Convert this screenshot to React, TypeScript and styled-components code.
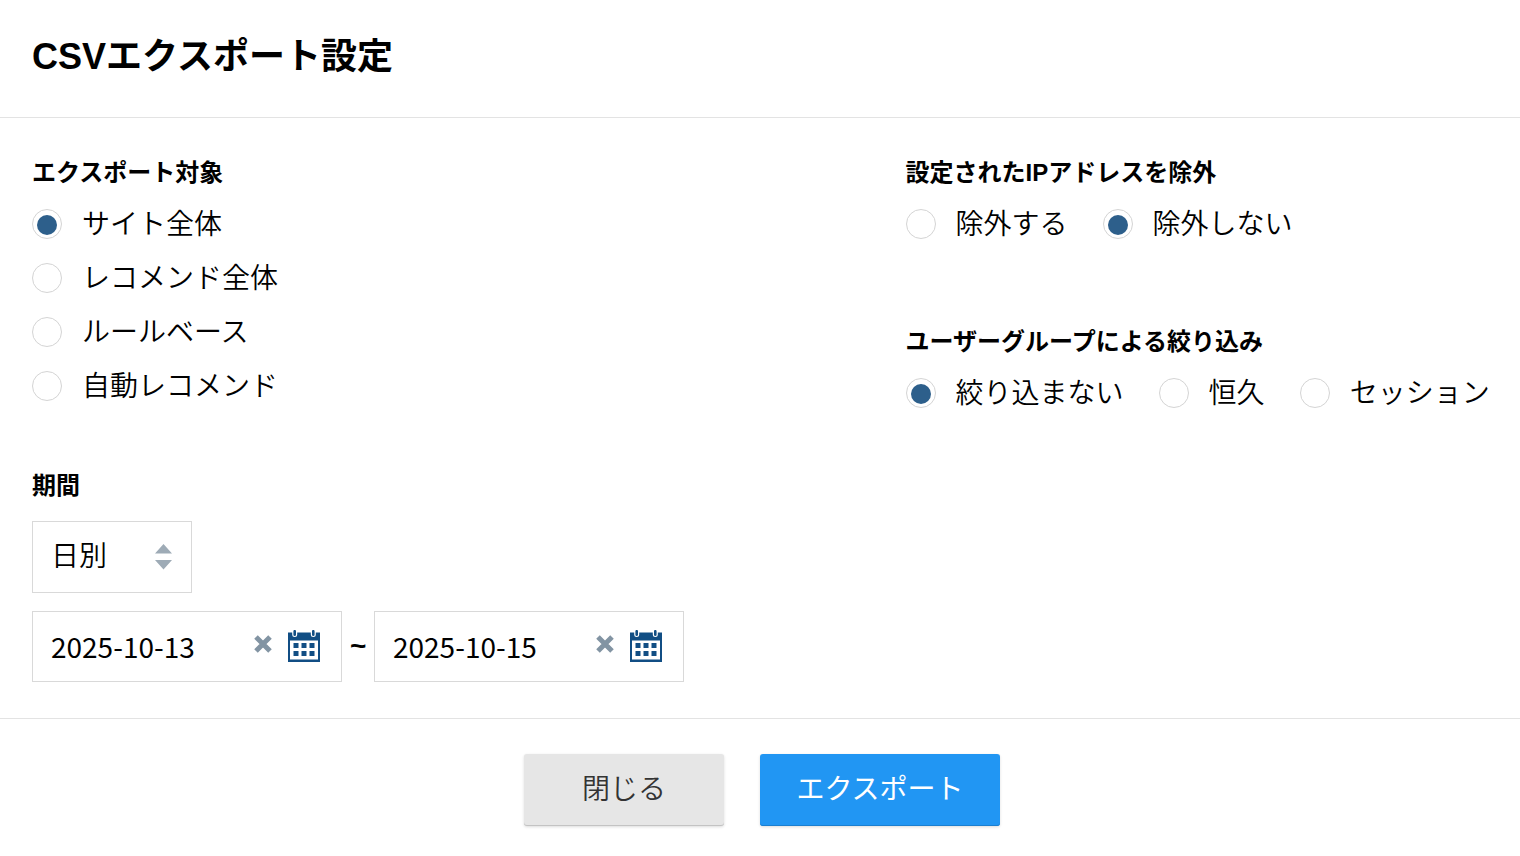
import { useState } from "react";
import styled, { createGlobalStyle } from "styled-components";

const GlobalStyle = createGlobalStyle`
  * { box-sizing: border-box; }
  body {
    margin: 0;
    background: #fff;
    color: #000;
    font-family: "Liberation Sans", "Noto Sans CJK JP", sans-serif;
    font-size: 28px;
  }
  button, input, select { font: inherit; color: inherit; }
`;

const Dialog = styled.form`
  display: flex;
  flex-direction: column;
  min-height: 100vh;
`;

const Header = styled.header`
  padding: 29px 32px 32px;
  border-bottom: 1px solid #e3e3e3;
`;

const Title = styled.h1`
  margin: 0;
  font-size: 36px;
  line-height: 56px;
  font-weight: 700;
`;

const Body = styled.div`
  display: grid;
  grid-template-columns: minmax(0, 3fr) minmax(0, 2fr);
  padding: 37px 32px 36px;
`;

const Column = styled.div<{ $gap: number }>`
  display: flex;
  flex-direction: column;
  gap: ${(p) => p.$gap}px;
`;

const Group = styled.fieldset`
  margin: 0;
  padding: 0;
  border: 0;
  min-width: 0;
`;

const GroupTitle = styled.legend`
  padding: 0;
  font-size: 24px;
  line-height: 36px;
  font-weight: 700;
  white-space: nowrap;
`;

const Options = styled.div<{ $row?: boolean }>`
  display: flex;
  flex-direction: ${(p) => (p.$row ? "row" : "column")};
  gap: ${(p) => (p.$row ? "0 35px" : "0")};
  padding-top: 7px;
`;

const OptionLabel = styled.label`
  display: flex;
  align-items: center;
  gap: 20px;
  height: 54px;
  line-height: 40px;
  font-weight: 350;
  white-space: nowrap;
`;

const Radio = styled.input`
  appearance: none;
  display: grid;
  place-items: center;
  flex: none;
  width: 30px;
  height: 30px;
  margin: 0 0 2px;
  padding-top: 2px;
  border: 1px solid #d4d4d4;
  border-radius: 50%;
  background: #fff;

  &:checked::before {
    content: "";
    width: 20px;
    height: 20px;
    border-radius: 50%;
    background: #2d5f8b;
  }
`;

const PeriodFields = styled.div`
  display: flex;
  flex-direction: column;
  align-items: flex-start;
  gap: 18px;
  padding-top: 17px;
`;

const SelectBox = styled.div`
  display: grid;
  grid-template-columns: 1fr 37px;
  align-items: center;
  width: 160px;
  height: 72px;
`;

const Select = styled.select`
  appearance: none;
  grid-area: 1 / 1 / 2 / 3;
  width: 100%;
  height: 100%;
  padding: 0 48px 2px 18px;
  border: 1px solid #d9d9d9;
  border-radius: 0;
  background: #fff;
  font-weight: 350;
`;

const SelectArrows = styled.svg`
  grid-area: 1 / 2;
  pointer-events: none;
`;

const DateRange = styled.div`
  display: flex;
  align-items: center;
  gap: 8px;
  font-weight: 700;
`;

const Tilde = styled.span`
  width: 16px;
  padding-bottom: 2px;
  text-align: center;
`;

const DateBox = styled.div`
  display: flex;
  align-items: center;
  width: 310px;
  height: 71px;
  padding: 0 21px 2px 18px;
  border: 1px solid #d9d9d9;
`;

const DateInput = styled.input`
  flex: 1;
  min-width: 0;
  padding: 0;
  border: 0;
  outline: 0;
  background: none;
  font-family: "Noto Sans CJK JP", sans-serif;
  font-weight: 400;
`;

const IconButton = styled.button`
  display: flex;
  padding: 0;
  border: 0;
  background: none;
  cursor: pointer;

  & + & { margin-left: 16px; }
`;

const Footer = styled.footer`
  display: flex;
  justify-content: center;
  gap: 36px;
  padding: 35px 30px 30px 34px;
  border-top: 1px solid #e3e3e3;
`;

const Button = styled.button<{ $primary?: boolean }>`
  width: ${(p) => (p.$primary ? 240 : 200)}px;
  height: 72px;
  padding: 0 0 6px;
  border: 0;
  border-radius: 3px;
  background: ${(p) => (p.$primary ? "#2196f3" : "#e6e6e6")};
  color: ${(p) => (p.$primary ? "#fff" : "#333")};
  font-weight: ${(p) => (p.$primary ? 400 : 350)};
  box-shadow: inset 0 -1px 0 ${(p) => (p.$primary ? "#1b7fd0" : "#c3c3c3")}, 0 1px 3px rgba(0, 0, 0, 0.14);
  cursor: pointer;
`;

function ClearIcon() {
  return (
    <svg width="18" height="22" viewBox="0 0 18 22" aria-hidden="true">
      <path d="M2 2 16 16M16 2 2 16" stroke="#8294a3" strokeWidth="5" />
    </svg>
  );
}

function CalendarIcon() {
  return (
    <svg width="32" height="32" viewBox="0 0 32 32" aria-hidden="true">
      <path fill="#114e84" d="M0 2.5h32V32H0z" />
      <path fill="#fff" d="M2 10.5h28V29.5H2z" />
      <path
        fill="#114e84"
        d="M5.5 13h5v5h-5zM13.5 13h5v5h-5zM21.5 13h5v5h-5zM5.5 21h5v5h-5zM13.5 21h5v5h-5zM21.5 21h5v5h-5z"
      />
      <path d="M6.7 0v4.5M25.3 0v4.5" stroke="#fff" strokeWidth="5" strokeLinecap="round" />
      <path d="M6.7 1.2v3.5M25.3 1.2v3.5" stroke="#114e84" strokeWidth="2.6" strokeLinecap="round" />
    </svg>
  );
}

function RadioGroup(props: { title: string; name: string; options: string[]; initial: number; row?: boolean }) {
  const [selected, setSelected] = useState(props.initial);
  return (
    <Group>
      <GroupTitle>{props.title}</GroupTitle>
      <Options $row={props.row}>
        {props.options.map((option, i) => (
          <OptionLabel key={option}>
            <Radio type="radio" name={props.name} checked={selected === i} onChange={() => setSelected(i)} />
            {option}
          </OptionLabel>
        ))}
      </Options>
    </Group>
  );
}

function DateField(props: { label: string; initial: string }) {
  const [value, setValue] = useState(props.initial);
  return (
    <DateBox>
      <DateInput aria-label={props.label} value={value} onChange={(e) => setValue(e.target.value)} />
      <IconButton type="button" aria-label="クリア" onClick={() => setValue("")}>
        <ClearIcon />
      </IconButton>
      <IconButton type="button" aria-label="カレンダー">
        <CalendarIcon />
      </IconButton>
    </DateBox>
  );
}

export default function App() {
  return (
    <>
      <GlobalStyle />
      <Dialog onSubmit={(e) => e.preventDefault()}>
        <Header>
          <Title>CSVエクスポート設定</Title>
        </Header>
        <Body>
          <Column $gap={54}>
            <RadioGroup
              title="エクスポート対象"
              name="target"
              options={["サイト全体", "レコメンド全体", "ルールベース", "自動レコメンド"]}
              initial={0}
            />
            <Group>
              <GroupTitle>期間</GroupTitle>
              <PeriodFields>
                <SelectBox>
                  <Select aria-label="期間" defaultValue="day">
                    <option value="day">日別</option>
                    <option value="month">月別</option>
                  </Select>
                  <SelectArrows width="17" height="26" viewBox="0 0 17 26" aria-hidden="true">
                    <path d="M8.5 0 17 9.5H0zM8.5 25.5 17 16H0z" fill="#9eabb6" />
                  </SelectArrows>
                </SelectBox>
                <DateRange>
                  <DateField label="開始日" initial="2025-10-13" />
                  <Tilde>~</Tilde>
                  <DateField label="終了日" initial="2025-10-15" />
                </DateRange>
              </PeriodFields>
            </Group>
          </Column>
          <Column $gap={72}>
            <RadioGroup
              title="設定されたIPアドレスを除外"
              name="ip"
              options={["除外する", "除外しない"]}
              initial={1}
              row
            />
            <RadioGroup
              title="ユーザーグループによる絞り込み"
              name="group"
              options={["絞り込まない", "恒久", "セッション"]}
              initial={0}
              row
            />
          </Column>
        </Body>
        <Footer>
          <Button type="button">閉じる</Button>
          <Button type="submit" $primary>
            エクスポート
          </Button>
        </Footer>
      </Dialog>
    </>
  );
}
